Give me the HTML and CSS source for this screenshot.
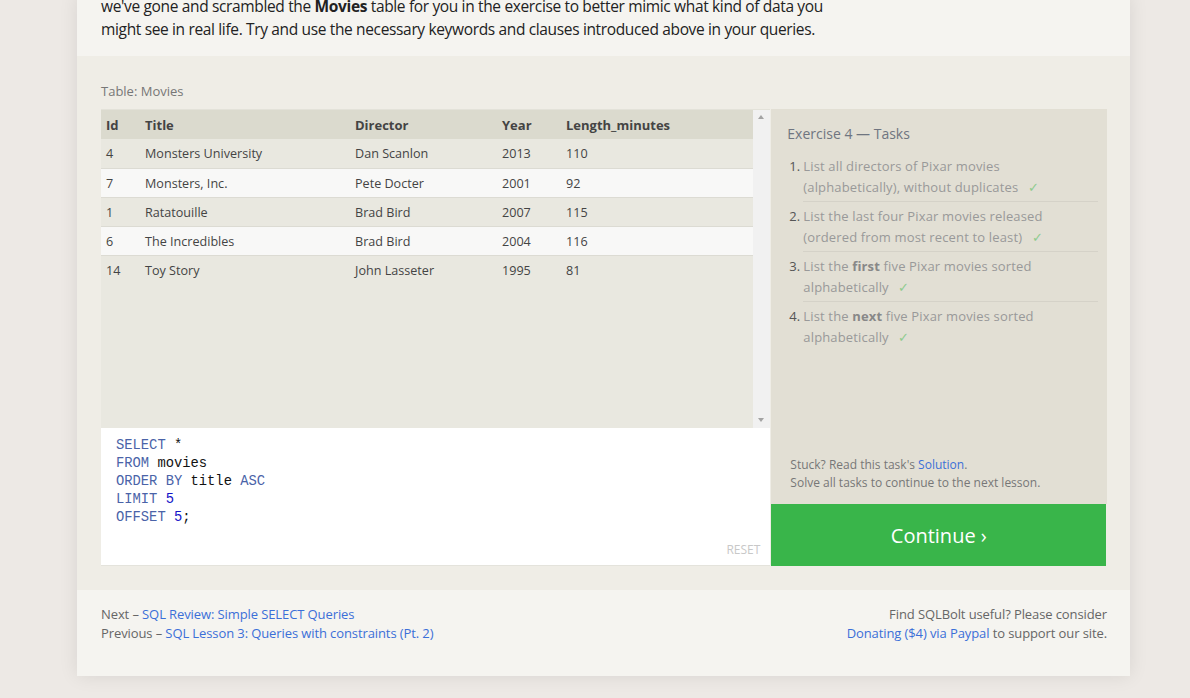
FILE: index.html
```html
<!DOCTYPE html>
<html>
<head>
<meta charset="utf-8">
<link rel="stylesheet" href="styles.css">
</head>
<body>
<div class="page">
  <p class="intro">we've gone and scrambled the <strong>Movies</strong> table for you in the exercise to better mimic what kind of data you might see in real life. Try and use the necessary keywords and clauses introduced above in your queries.</p>

  <section class="exercise">
    <div class="table-label">Table: Movies</div>
    <div class="workspace">
      <div class="left">
        <div class="results">
          <div class="table-wrap">
            <table class="movies">
              <thead>
                <tr><th class="c-id">Id</th><th class="c-title">Title</th><th class="c-dir">Director</th><th class="c-year">Year</th><th class="c-len">Length_minutes</th></tr>
              </thead>
              <tbody>
                <tr><td>4</td><td>Monsters University</td><td>Dan Scanlon</td><td>2013</td><td>110</td></tr>
                <tr><td>7</td><td>Monsters, Inc.</td><td>Pete Docter</td><td>2001</td><td>92</td></tr>
                <tr><td>1</td><td>Ratatouille</td><td>Brad Bird</td><td>2007</td><td>115</td></tr>
                <tr><td>6</td><td>The Incredibles</td><td>Brad Bird</td><td>2004</td><td>116</td></tr>
                <tr><td>14</td><td>Toy Story</td><td>John Lasseter</td><td>1995</td><td>81</td></tr>
              </tbody>
            </table>
          </div>
          <div class="scrollbar">
            <span class="arrow up"></span>
            <span class="arrow down"></span>
          </div>
        </div>
        <div class="editor">
<pre class="code"><span class="kw">SELECT</span> *
<span class="kw">FROM</span> movies
<span class="kw">ORDER BY</span> title <span class="kw">ASC</span>
<span class="kw">LIMIT</span> <span class="num">5</span>
<span class="kw">OFFSET</span> <span class="num">5</span>;</pre>
          <div class="reset">RESET</div>
        </div>
      </div>
      <div class="right">
        <div class="tasks">
          <div class="tasks-title">Exercise 4 — Tasks</div>
          <ol class="task-list">
            <li><span class="n">1.</span><span class="t">List all directors of Pixar movies (alphabetically), without duplicates <span class="check">✓</span></span></li>
            <li><span class="n">2.</span><span class="t">List the last four Pixar movies released (ordered from most recent to least) <span class="check">✓</span></span></li>
            <li><span class="n">3.</span><span class="t">List the <b>first</b> five Pixar movies sorted alphabetically <span class="check">✓</span></span></li>
            <li><span class="n">4.</span><span class="t">List the <b>next</b> five Pixar movies sorted alphabetically <span class="check">✓</span></span></li>
          </ol>
          <div class="stuck">Stuck? Read this task's <a href="#">Solution</a>.<br>Solve all tasks to continue to the next lesson.</div>
        </div>
        <a class="continue" href="#">Continue ›</a>
      </div>
    </div>
  </section>

  <footer class="footer">
    <div class="nav">
      <div>Next – <a href="#">SQL Review: Simple SELECT Queries</a></div>
      <div>Previous – <a href="#">SQL Lesson 3: Queries with constraints (Pt. 2)</a></div>
    </div>
    <div class="donate">
      <div>Find SQLBolt useful? Please consider</div>
      <div><a href="#">Donating ($4) via Paypal</a> to support our site.</div>
    </div>
  </footer>
</div>
</body>
</html>
```
FILE: styles.css
```css
html, body {
  margin: 0;
  padding: 0;
}
body {
  background: #ede9e5;
  font-family: "Open Sans", "Noto Sans", sans-serif;
  color: #444;
  height: 698px;
  overflow: hidden;
}
a {
  color: #3b6fd8;
  text-decoration: none;
}
.page {
  margin-left: 77px;
  width: 1053px;
  background: #f5f4f0;
  box-shadow: 0 0 18px rgba(0, 0, 0, 0.09);
}
.intro {
  margin: -5px 0 0 0;
  padding: 0 24px 15px 24px;
  max-width: 740px;
  font-size: 15.5px;
  letter-spacing: -0.35px;
  line-height: 23px;
  color: #222;
}
.intro strong {
  font-weight: 700;
}
.exercise {
  background: #efede6;
  padding: 26px 23px 24px 24px;
}
.table-label {
  font-size: 13px;
  line-height: 18px;
  color: #777;
  margin-bottom: 9px;
}
.workspace {
  display: flex;
  height: 457px;
}
.left {
  width: 670px;
  display: flex;
  flex-direction: column;
}
.results {
  display: flex;
  height: 319px;
  background: #e9e8e0;
  border-top: 1px solid #e3e2d9;
  box-sizing: border-box;
}
.table-wrap {
  flex: 1;
}
.movies {
  width: 100%;
  border-collapse: collapse;
  font-size: 12.6px;
  color: #444;
}
.movies th {
  background: #dbdace;
  text-align: left;
  font-weight: 700;
  height: 29px;
  padding: 0 0 0 5px;
  font-size: 13px;
}
.movies td {
  height: 28px;
  padding: 0 0 0 5px;
  border-top: 1px solid #dcdbd3;
}
.movies tbody tr:nth-child(even) td {
  background: #f8f8f7;
}
.movies tbody tr:first-child td {
  border-top: none;
  height: 29px;
}
.c-id { width: 34px; }
.c-title { width: 205px; }
.c-dir { width: 142px; }
.c-year { width: 59px; }
.scrollbar {
  width: 17px;
  background: #f1f1f1;
  position: relative;
}
.arrow {
  position: absolute;
  left: 5px;
  width: 0;
  height: 0;
  border-left: 3.5px solid transparent;
  border-right: 3.5px solid transparent;
}
.arrow.up {
  top: 5px;
  border-bottom: 4px solid #a3a3a3;
}
.arrow.down {
  bottom: 6px;
  border-top: 4px solid #a3a3a3;
}
.editor {
  flex: 1;
  background: #fff;
  display: flex;
  flex-direction: column;
  border-bottom: 1px solid #e4e3dc;
}
.code {
  margin: 0;
  padding: 9px 15px 0 15px;
  font-family: "Liberation Mono", "DejaVu Sans Mono", monospace;
  font-size: 13.8px;
  line-height: 18px;
  color: #111;
  flex: 1;
}
.kw { color: #4a63a8; }
.num { color: #1414c8; }
.reset {
  text-align: right;
  font-size: 12px;
  color: #c8c8c8;
  padding: 0 10px 7px 0;
}
.right {
  width: 336px;
  margin-left: 1px;
  display: flex;
  flex-direction: column;
}
.tasks {
  flex: 1;
  background: #e2dfd4;
  padding: 16px 9px 12px 16px;
  display: flex;
  flex-direction: column;
}
.tasks-title {
  font-size: 14px;
  line-height: 18px;
  color: #6f7580;
  margin-bottom: 13px;
}
.task-list {
  list-style: none;
  margin: 0;
  padding: 0;
  flex: 1;
}
.task-list li {
  display: flex;
  font-size: 13px;
  letter-spacing: 0.15px;
  line-height: 20.5px;
  color: #999;
}
.task-list .n {
  width: 14px;
  padding-left: 2px;
  color: #555;
  flex: none;
  letter-spacing: 0;
}
.task-list .t {
  flex: 1;
  padding: 4px 0 4px 0;
  border-bottom: 1px solid #d5d2c8;
}
.task-list li:first-child .t { padding-top: 0; }
.task-list li .n { padding-top: 4px; }
.task-list li:first-child .n { padding-top: 0; }
.task-list li:last-child .t { border-bottom: none; }
.task-list b { color: #888; }
.check {
  color: #8ecb8e;
  margin-left: 6px;
}
.stuck {
  font-size: 12px;
  line-height: 18px;
  color: #777;
  padding-left: 3px;
}
.continue {
  display: flex;
  align-items: center;
  justify-content: center;
  height: 62px;
  background: #39b54a;
  color: #fff;
  font-size: 20px;
  width: 335px;
}
.footer {
  display: flex;
  justify-content: space-between;
  padding: 15px 23px 33px 24px;
  font-size: 13px;
  line-height: 19px;
  color: #666;
  letter-spacing: -0.1px;
}
.donate {
  text-align: right;
}
```
